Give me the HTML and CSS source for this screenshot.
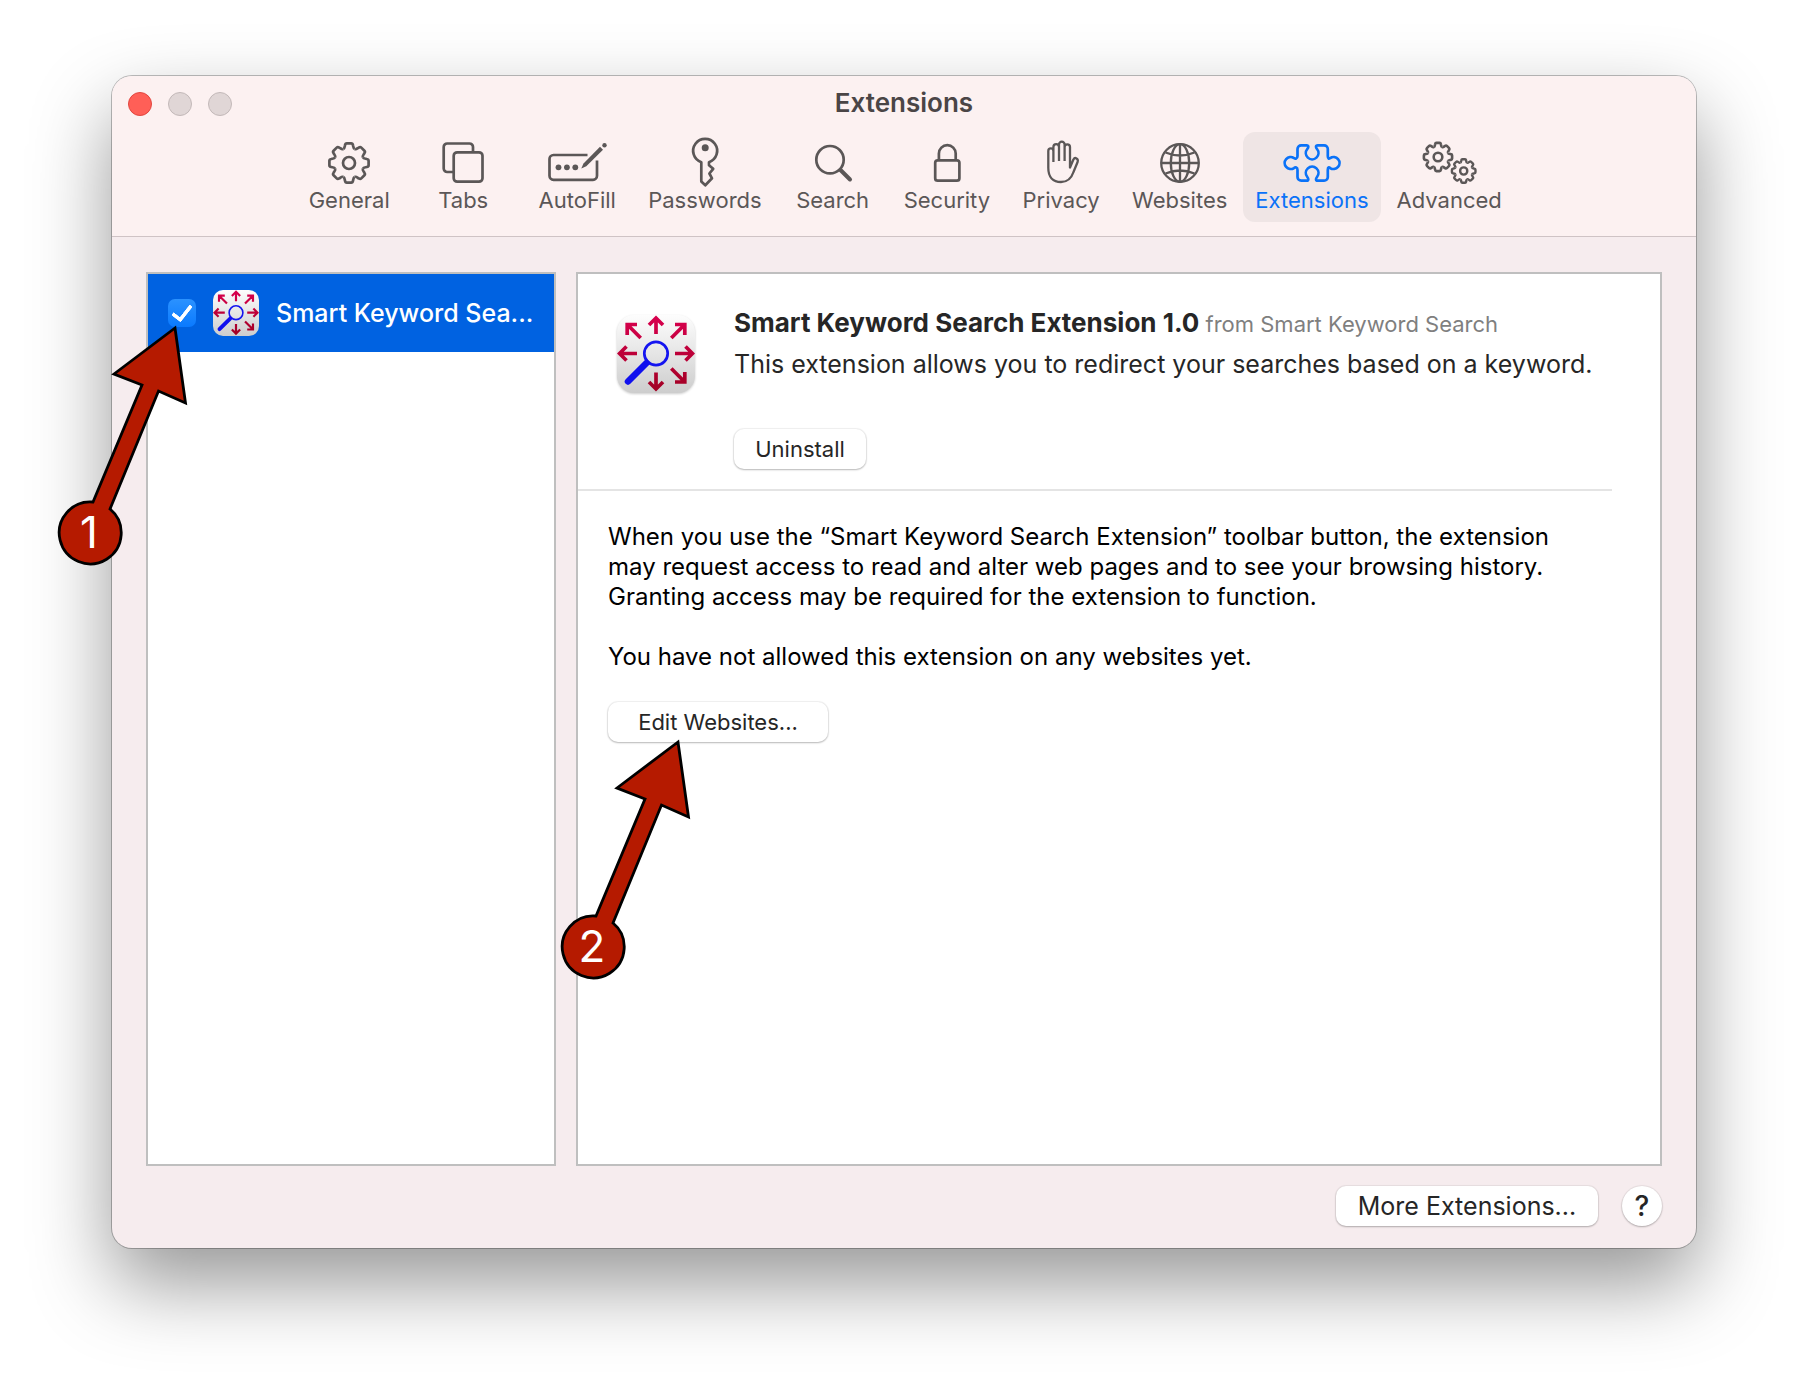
FILE: index.html
```html
<!DOCTYPE html>
<html lang="en">
<head>
<meta charset="utf-8">
<title>Extensions</title>
<link rel="stylesheet" href="styles.css">
</head>
<body>
<svg class="defs" aria-hidden="true">
  <defs>
    <linearGradient id="tile" x1="0" y1="0" x2="0" y2="1"><stop offset="0" stop-color="#fdfdfd"/><stop offset="1" stop-color="#cdcdcd"/></linearGradient>
    <linearGradient id="rays" gradientUnits="userSpaceOnUse" x1="0" y1="0" x2="0" y2="78"><stop offset="0" stop-color="#d9004f"/><stop offset="1" stop-color="#a00022"/></linearGradient>
    <path id="tooth" d="M-5.7-13.9C-4.3-14.5-4.4-16-4-17.8Q-3.7-19.6-2.2-19.6H2.2Q3.7-19.6 4-17.8C4.4-16 4.3-14.5 5.7-13.9"/>
    <g id="gear">
      <use href="#tooth"/><use href="#tooth" transform="rotate(45)"/><use href="#tooth" transform="rotate(90)"/><use href="#tooth" transform="rotate(135)"/>
      <use href="#tooth" transform="rotate(180)"/><use href="#tooth" transform="rotate(225)"/><use href="#tooth" transform="rotate(270)"/><use href="#tooth" transform="rotate(315)"/>
      <circle r="6"/>
    </g>
    <symbol id="app-logo" viewBox="0 0 78 78">
      <rect width="78" height="78" rx="17" fill="url(#tile)"/>
      <path fill="none" stroke="url(#rays)" stroke-width="3.7" d="M39 19V4M32 10l7-7 7 7M39 57.500V73M32 67l7 7 7-7M58 38.500H74M68.500 31.500l7 7-7 7M20 38.500H4M9.500 31.500l-7 7 7 7M23.700 23L10.500 9.800M20 9.500H10.200V20M54.300 23L67.500 9.800M58 9.500H67.800V20M54.300 53.500L67.500 66.700M58 67H67.800V57"/>
      <circle cx="39" cy="38.500" r="11.700" fill="none" stroke="#1414f0" stroke-width="2.700"/>
      <path fill="none" stroke="#1010ee" stroke-width="6.500" stroke-linecap="round" d="M29.500 48L11 66.500"/>
    </symbol>
    <symbol id="callout" viewBox="56 324 134 244">
      <path d="M175 328L114 374L142 385L93 502A31 31 0 1 0 110 509L158.500 391L185.500 403Z" fill="#b51a00" stroke="#000" stroke-width="2.800"/>
    </symbol>
  </defs>
</svg>

<main class="window">
  <header class="titlebar">
    <div class="lights">
      <button class="light light-close" aria-label="Close"></button>
      <button class="light" aria-label="Minimize" disabled></button>
      <button class="light" aria-label="Zoom" disabled></button>
    </div>
    <h1 class="title">Extensions</h1>
    <nav class="toolbar">
      <button class="tool"><svg class="icon" viewBox="0 0 64 50"><use href="#gear" x="32" y="26"/></svg>General</button>
      <button class="tool"><svg class="icon" viewBox="0 0 64 50"><path d="M42 15V10a3.500 3.500 0 0 0-3.500-3.500H16.200A3.500 3.500 0 0 0 12.700 10V31.500A3.500 3.500 0 0 0 16.200 35H22.500"/><rect x="22.700" y="15.300" width="28.800" height="29.400" rx="3.500"/></svg>Tabs</button>
      <button class="tool"><svg class="icon" viewBox="0 0 64 50"><path d="M42.500 18H8.500A4 4 0 0 0 4.500 22V38.800A4 4 0 0 0 8.500 42.800H48A4 4 0 0 0 52 38.800V23.500"/><g class="solid"><circle cx="13.500" cy="30.300" r="2.900"/><circle cx="21.900" cy="30.300" r="2.900"/><circle cx="30.300" cy="30.300" r="2.900"/><path d="M36.300 31.500L38.500 26.500L55 9.800L58 12.800L41.300 29.300Z"/><circle cx="59.500" cy="8.300" r="2.200"/></g></svg>AutoFill</button>
      <button class="tool"><svg class="icon" viewBox="0 0 64 50"><path d="M28.300 25.200A12 12 0 1 1 36 25.200V28.200L40.200 31.800L36.400 36.500L39 41.300L32.300 48.300L28.300 44.500Z"/><circle class="solid" cx="32.200" cy="10.800" r="3.500"/></svg>Passwords</button>
      <button class="tool"><svg class="icon" viewBox="0 0 64 50"><circle cx="29" cy="22.700" r="13.700"/><path class="thick" d="M39.500 33L49 42.500"/></svg>Search</button>
      <button class="tool"><svg class="icon" viewBox="0 0 64 50"><rect x="20.200" y="23.300" width="24.200" height="20.400" rx="2.500"/><path d="M23.900 23V16.600a8.400 8.400 0 0 1 16.800 0V23"/></svg>Security</button>
      <button class="tool"><svg class="icon icon-fine" viewBox="0 0 64 50"><path d="M24.400 25V14a2.500 2.500 0 0 0-5.100 0V31C19.300 40 24 45 32 45C39.500 45 42.500 41 44.500 35L48.600 25C49.700 21.500 46 19.700 44.400 22.500L41 30.500V10a2.700 2.700 0 0 0-5.400 0V24M35.600 24V7.500a2.800 2.800 0 0 0-5.600 0V24M30 24V10a2.800 2.800 0 0 0-5.600 0V25"/></svg>Privacy</button>
      <button class="tool"><svg class="icon icon-fine" viewBox="0 0 64 50"><circle cx="32" cy="26" r="18.800"/><ellipse cx="32" cy="26" rx="9.200" ry="18.800"/><path d="M32 7V45M13 26H51M17.500 15.500Q32 21.500 46.500 15.500M17.500 36.500Q32 30.500 46.500 36.500"/></svg>Websites</button>
      <button class="tool tool-active" aria-current="page"><svg class="icon" viewBox="0 0 64 50"><path d="M17.500 12a3.700 3.700 0 0 1 3.700-3.700H26.500C29 8.300 28.500 10.500 27.300 12A6.300 6.300 0 1 0 37 12C35.800 10.500 35.300 8.300 37.800 8.300H44.100A3.700 3.700 0 0 1 47.800 12V19C47.800 22 49 22 50.200 21A6 6 0 1 1 50.200 31C49 30 47.800 30 47.800 33V40A3.700 3.700 0 0 1 44.100 43.700H37.800C35.300 43.700 35.800 41.500 37 40A6.300 6.300 0 1 0 27.300 40C28.500 41.500 29 43.700 26.500 43.700H21.200A3.700 3.700 0 0 1 17.500 40V33C17.500 30 15.300 30 14 31A6 6 0 1 1 14 21C15.300 22 17.500 22 17.500 19Z"/></svg>Extensions</button>
      <button class="tool"><svg class="icon" viewBox="0 0 64 50"><g class="gear-large" transform="translate(21 20) scale(.72)"><use href="#gear"/></g><g class="gear-small" transform="translate(46.700 34) scale(.6)"><use href="#gear"/></g></svg>Advanced</button>
    </nav>
  </header>

  <div class="content">
    <div class="panes">
      <section class="pane" aria-label="Installed extensions">
        <div class="row">
          <input class="check" type="checkbox" id="ext" checked>
          <svg class="row-logo"><use href="#app-logo"/></svg>
          <label class="row-name" for="ext">Smart Keyword Sea...</label>
          <div class="callout callout-row"><svg class="callout-shape"><use href="#callout"/></svg><span class="callout-number">1</span></div>
        </div>
      </section>
      <section class="pane detail">
        <div class="summary">
          <svg class="logo"><use href="#app-logo"/></svg>
          <div class="about">
            <h2 class="name">Smart Keyword Search Extension 1.0 <span class="from">from Smart Keyword Search</span></h2>
            <p class="desc">This extension allows you to redirect your searches based on a keyword.</p>
            <button class="btn btn-uninstall">Uninstall</button>
          </div>
        </div>
        <div class="access">
          <p class="text">When you use the “Smart Keyword Search Extension” toolbar button, the extension<br>may request access to read and alter web pages and to see your browsing history.<br>Granting access may be required for the extension to function.</p>
          <p class="text">You have not allowed this extension on any websites yet.</p>
          <div class="edit">
            <button class="btn btn-edit">Edit Websites...</button>
            <div class="callout callout-edit"><svg class="callout-shape"><use href="#callout"/></svg><span class="callout-number">2</span></div>
          </div>
        </div>
      </section>
    </div>
    <footer class="footer">
      <button class="btn btn-more">More Extensions...</button>
      <button class="btn btn-help" aria-label="Help">?</button>
    </footer>
  </div>
</main>
</body>
</html>
```
FILE: styles.css
```css
*, *::after { box-sizing: border-box; }

body {
  margin: 0;
  min-height: 100vh;
  padding: 76px 112px 148px;
  display: flex;
  background: #fff;
  color: #262626;
  font-family: Inter, "Liberation Sans", sans-serif;
}

h1, h2, p { margin: 0; }
button { font-family: inherit; color: inherit; border: 0; padding: 0; }
.defs { position: absolute; width: 0; height: 0; }

.window {
  flex: 1;
  min-width: 0;
  display: flex;
  flex-direction: column;
  border-radius: 20px;
  background: #f6ecee;
  box-shadow: 0 0 0 1px rgba(0, 0, 0, .25), 0 36px 80px rgba(0, 0, 0, .41);
}

/* Title bar and toolbar */
.titlebar {
  display: grid;
  grid-template-columns: 1fr auto 1fr;
  padding: 12px 16px 14px;
  row-gap: 12px;
  border-bottom: 1px solid #cfc3c5;
  border-radius: 20px 20px 0 0;
  background: #fcf1f1;
}
.lights { display: flex; align-items: center; gap: 16px; }
.light { width: 24px; height: 24px; border-radius: 50%; border: 1px solid #c3b9b9; background: #e0d6d6; }
.light-close { border-color: #e2463f; background: #ff5f57; }
.title { height: 32px; font-size: 26px; line-height: 30px; font-weight: 600; color: #4a4546; }
.toolbar { grid-column: 1 / -1; display: flex; justify-content: center; gap: 4px; }
.tool {
  display: flex;
  flex-direction: column;
  align-items: center;
  gap: 1px;
  min-width: 110px;
  padding: 5px 12px 10px;
  border-radius: 12px;
  background: none;
  color: #5b5757;
  font-size: 22px;
  line-height: 24px;
}
.tool-active { background: #efe5e5; color: #0a72f8; }
.icon { width: 64px; height: 50px; fill: none; stroke: currentColor; stroke-width: 2.7px; stroke-linejoin: round; overflow: visible; }
.gear-large { stroke-width: 3.6px; }
.gear-small { stroke-width: 4px; }
.icon-fine { stroke-width: 2.3px; }
.solid { fill: currentColor; stroke: none; }
.thick { stroke-width: 4px; stroke-linecap: round; }

/* Two panes */
.content { flex: 1; display: flex; flex-direction: column; gap: 20px; padding: 35px 34px 22px; }
.panes { flex: 1; display: grid; grid-template-columns: 410px minmax(0, 1fr); gap: 20px; }
.pane { border: 2px solid #bfbfbf; background: #fff; }

.row {
  position: relative;
  display: flex;
  align-items: center;
  height: 78px;
  padding: 0 20px;
  background: #0062e1;
  color: #fff;
}
.check {
  appearance: none;
  display: flex;
  justify-content: center;
  flex: none;
  width: 28px;
  height: 28px;
  margin: 0 17px 0 0;
  border-radius: 7px;
  background: linear-gradient(#2b92ff, #0a7aff);
}
.check:checked::after {
  content: "";
  flex: none;
  width: 12px;
  height: 20px;
  margin-top: 2px;
  border: solid #fff;
  border-width: 0 4px 4px 0;
  border-radius: 2px;
  transform: rotate(38deg);
}
.row-logo { flex: none; width: 46px; height: 46px; margin-right: 17px; }
.row-name { white-space: nowrap; font-size: 25px; line-height: 32px; font-weight: 500; }

.detail { padding-right: 48px; }
.summary { display: flex; gap: 39px; padding: 31px 0 20px 39px; border-bottom: 2px solid #e4e4e4; }
.logo { flex: none; width: 78px; height: 78px; margin-top: 10px; filter: drop-shadow(0 1px 1px rgba(0, 0, 0, .2)); }
.about { min-width: 0; white-space: nowrap; }
.name { font-size: 26px; line-height: 36px; font-weight: 700; }
.from { font-size: 22px; font-weight: 400; color: #7f7f7f; }
.desc { padding: 4px 0 47px; font-size: 25px; line-height: 36px; }

.access { display: flex; flex-direction: column; align-items: flex-start; gap: 30px; padding: 31px 30px; color: #000; }
.text { font-size: 24px; line-height: 30px; white-space: nowrap; }
.edit { position: relative; color: #262626; }

.btn {
  height: 40px;
  border-radius: 10px;
  background: #fff;
  box-shadow: 0 0 1px 1px rgba(0, 0, 0, .06), 0 1px 2px rgba(0, 0, 0, .24);
  font-size: 22px;
  line-height: 32px;
}
.btn-uninstall { width: 132px; }
.btn-edit { width: 220px; }
.btn-more { width: 262px; font-size: 25px; }
.btn-help { width: 40px; border-radius: 50%; font-size: 28px; font-weight: 500; }
.footer { display: flex; justify-content: flex-end; gap: 24px; }

/* Numbered arrows */
.callout { position: absolute; z-index: 1; width: 134px; height: 244px; }
.callout-row { left: -92px; top: 50px; }
.callout-edit { left: -49px; top: 36px; }
.callout-shape { display: block; width: 134px; height: 244px; }
.callout-number {
  position: absolute;
  left: 2px;
  bottom: 5px;
  width: 62px;
  color: #fff;
  font-size: 44px;
  line-height: 62px;
  text-align: center;
}
```
